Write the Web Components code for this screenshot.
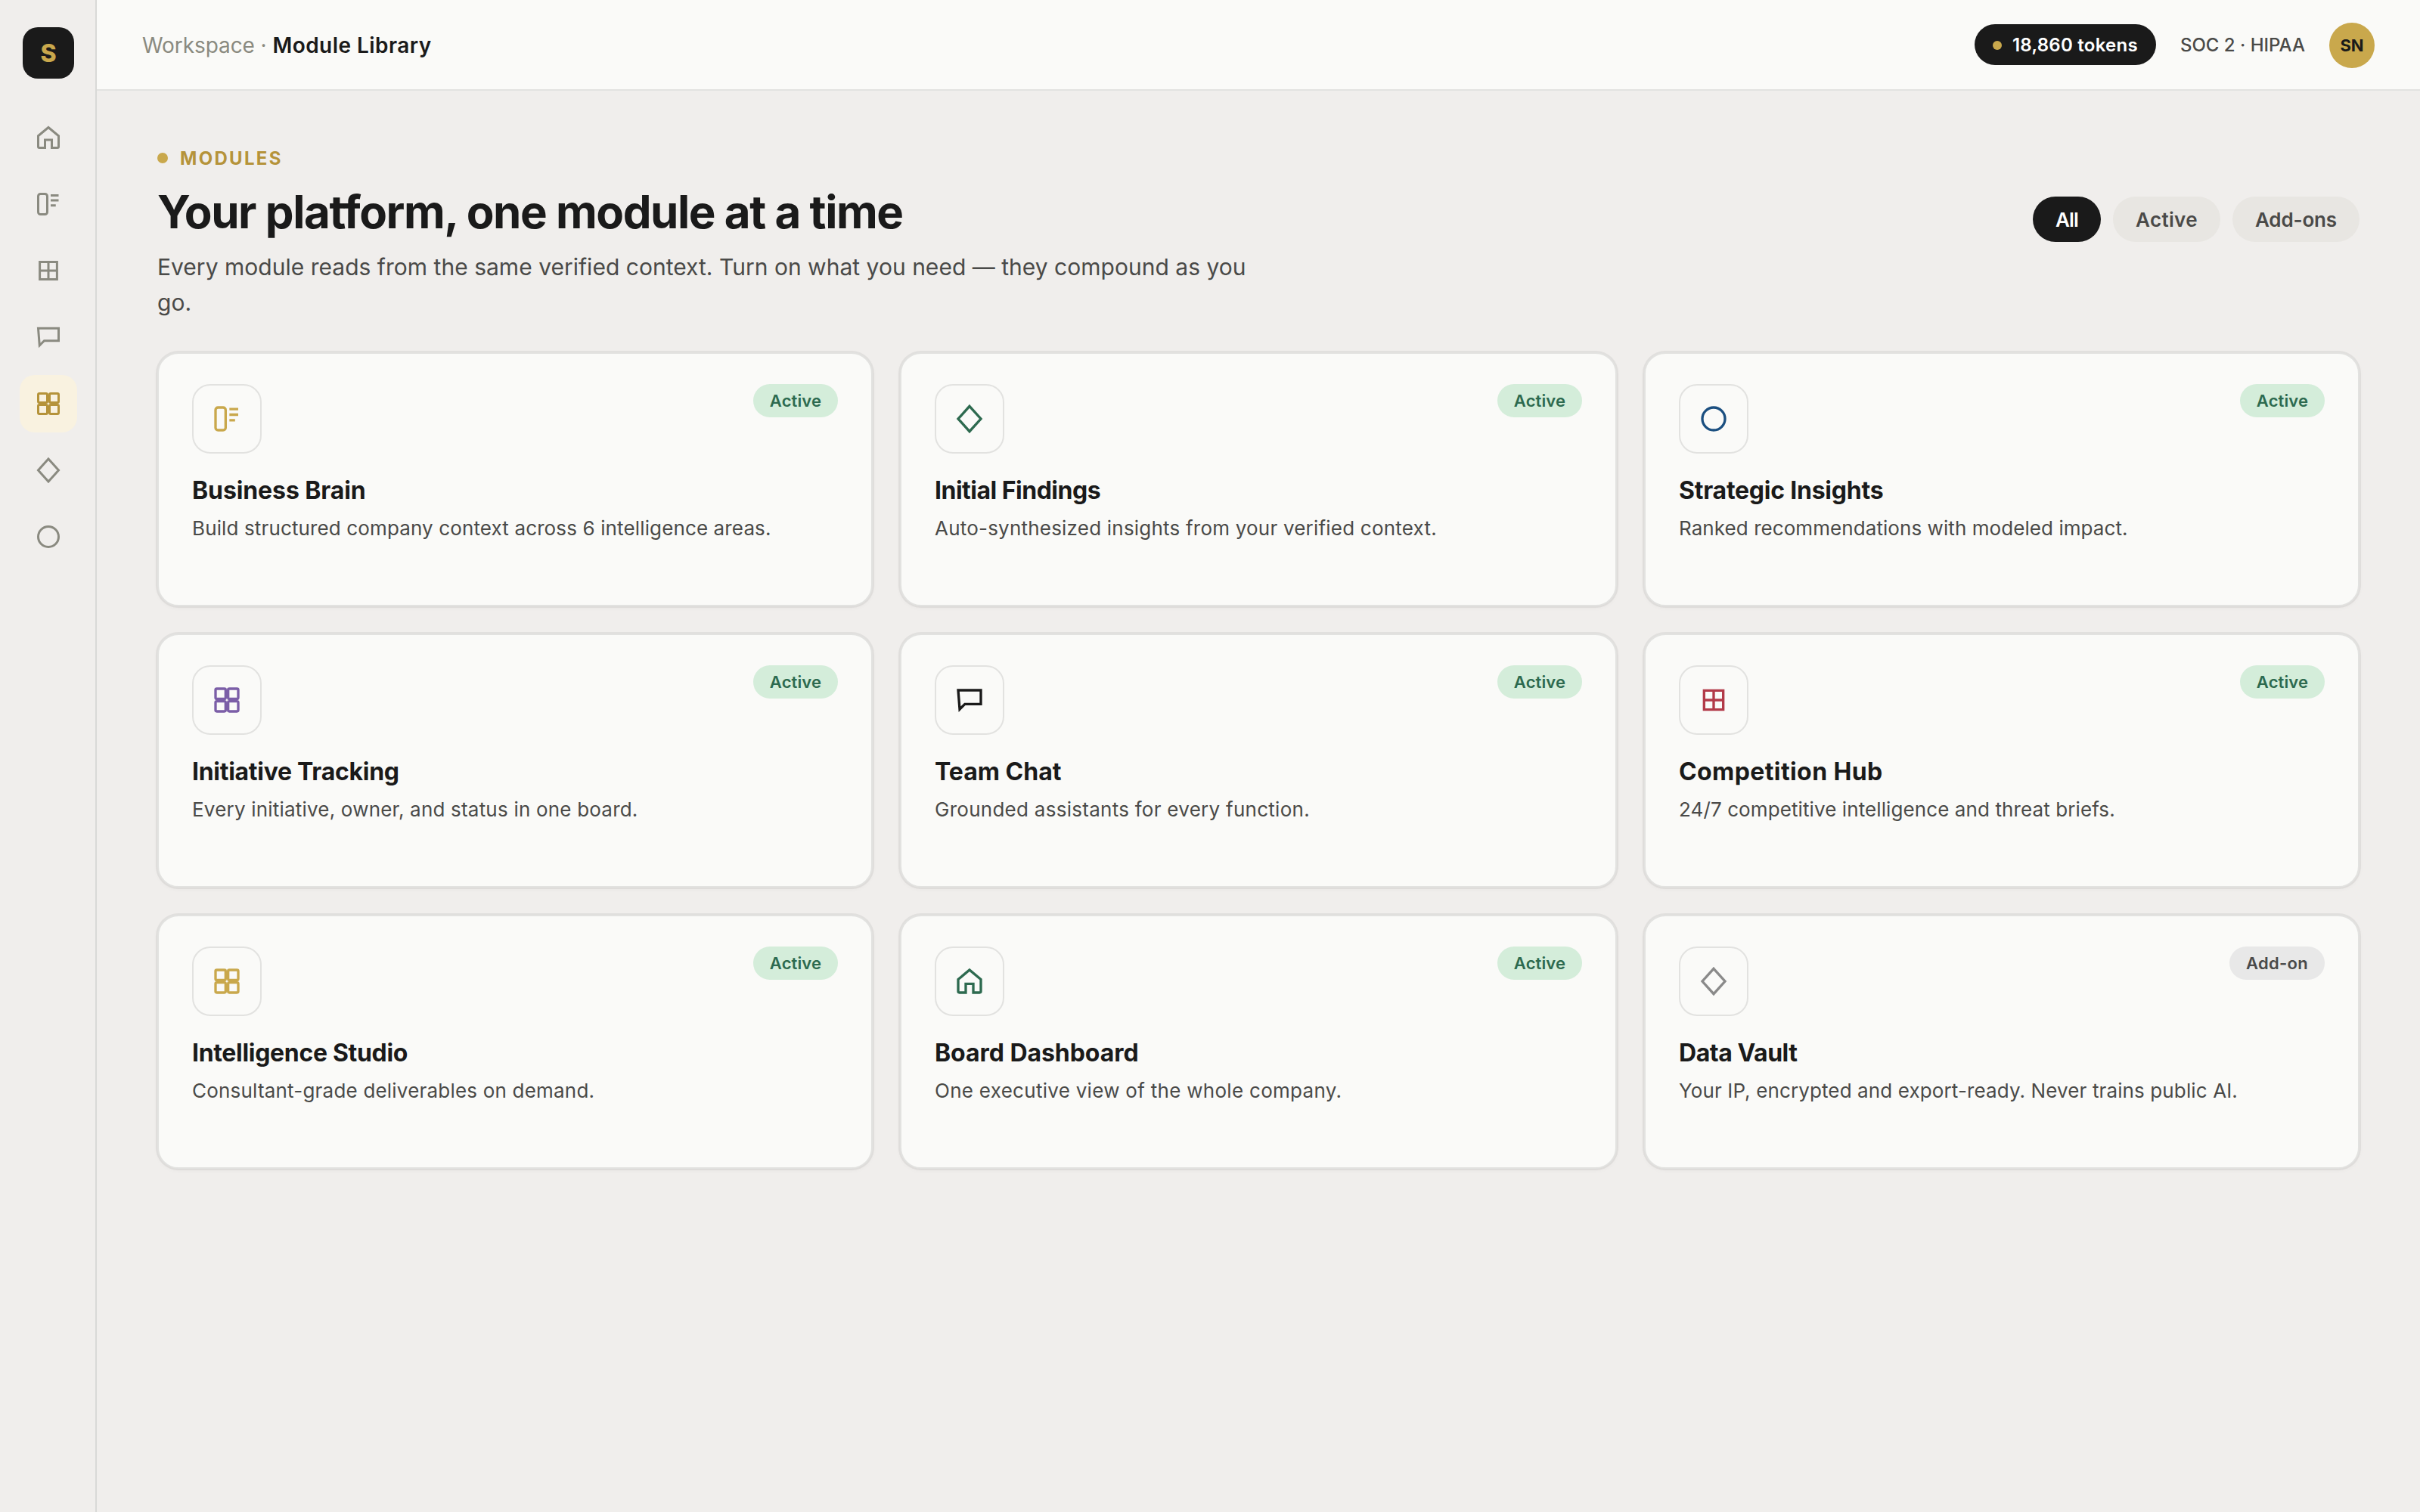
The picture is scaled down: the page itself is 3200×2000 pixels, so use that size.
<!DOCTYPE html>
<html lang="en">
<head>
<meta charset="utf-8">
<title>Module Library</title>
<style>
  :root {
    --bg: #f0eeec;
    --surface: #fafaf8;
    --line: #e2e2e0;
    --ink: #1a1a1a;
    --ink-2: #4a4a48;
    --muted: #8a8a80;
    --gold: #c9a84c;
    --gold-deep: #b5933a;
  }

  body {
    margin: 0;
    background: var(--bg);
    color: var(--ink);
    font-family: Inter, "Liberation Sans", sans-serif;
  }
</style>
</head>
<body>
<app-shell>
  <side-nav slot="nav"></side-nav>
  <top-bar slot="top" section="Workspace" page="Module Library" tokens="18,860 tokens" compliance="SOC 2 · HIPAA" initials="SN"></top-bar>
  <page-head eyebrow="Modules">
    <span slot="title">Your platform, one module at a time</span>
    <span slot="lead">Every module reads from the same verified context. Turn on what you need — they compound as you go.</span>
    <filter-pill slot="filters" style="letter-spacing: -0.8px" selected>All</filter-pill>
    <filter-pill slot="filters" style="letter-spacing: 0.35px">Active</filter-pill>
    <filter-pill slot="filters" style="letter-spacing: -0.15px">Add-ons</filter-pill>
  </page-head>
  <module-grid>
    <module-card icon="brain" color="#c9a84c" name="Business Brain" style="--name-track: -0.1px; --text-track: 0.13px">Build structured company context across 6 intelligence areas.</module-card>
    <module-card icon="diamond" color="#2d6a4f" name="Initial Findings" style="--name-track: -0.5px; --text-track: 0.21px">Auto-synthesized insights from your verified context.</module-card>
    <module-card icon="circle" color="#1b4f80" name="Strategic Insights" style="--name-track: -0.24px; --text-track: 0.07px">Ranked recommendations with modeled impact.</module-card>
    <module-card icon="grid" color="#7b5ea7" name="Initiative Tracking" style="--name-track: -0.28px; --text-track: 0.2px">Every initiative, owner, and status in one board.</module-card>
    <module-card icon="chat" color="#1a1a1a" name="Team Chat" style="--name-track: 0px; --text-track: 0.27px">Grounded assistants for every function.</module-card>
    <module-card icon="table" color="#b23a48" name="Competition Hub" style="--name-track: 0.4px; --text-track: 0.1px">24/7 competitive intelligence and threat briefs.</module-card>
    <module-card icon="grid" color="#c9a84c" name="Intelligence Studio" style="--text-track: 0.2px">Consultant-grade deliverables on demand.</module-card>
    <module-card icon="home" color="#2d6a4f" name="Board Dashboard" style="--name-track: -0.05px; --text-track: 0.29px">One executive view of the whole company.</module-card>
    <module-card icon="diamond" color="#8a8a8a" name="Data Vault" status="Add-on" style="--name-track: -0.45px; --text-track: 0.12px">Your IP, encrypted and export-ready. Never trains public AI.</module-card>
  </module-grid>
</app-shell>

<script>
const ICONS = {
  home: '<path d="M3 10.5L12 3l9 7.5V20a1 1 0 0 1-1 1h-5v-7H9v7H4a1 1 0 0 1-1-1z"/>',
  brain: '<rect x="3" y="3" width="8" height="18" rx="2"/><path d="M14 4.3h7M14 8.7h7M14 13.1h4.5"/>',
  table: '<path d="M4.4 4.4h15.2v15.2H4.4zM12 4.4v15.2M4.4 12h15.2"/>',
  chat: '<path d="M3 4.2h18v11H8.3L4.2 19.3z"/>',
  grid: '<rect x="3" y="3" width="8" height="8" rx="1"/><rect x="13" y="3" width="8" height="8" rx="1"/><rect x="3" y="13" width="8" height="8" rx="1"/><rect x="13" y="13" width="8" height="8" rx="1"/>',
  diamond: '<path d="M12 2l9 10-9 10-9-10z"/>',
  circle: '<circle cx="12" cy="12" r="9"/>'
};

class UiIcon extends HTMLElement {
  connectedCallback() {
    this.attachShadow({ mode: "open" });
    this.shadowRoot.innerHTML = `
      <style>
        :host { display: block; width: 36px; height: 36px; }
        svg {
          display: block;
          width: 100%;
          height: 100%;
          fill: none;
          stroke: currentColor;
          stroke-width: 2;
        }
      </style>
      <svg viewBox="0 0 24 24">${ICONS[this.getAttribute("name")]}</svg>
    `;
  }
}

class AppShell extends HTMLElement {
  connectedCallback() {
    this.attachShadow({ mode: "open" });
    this.shadowRoot.innerHTML = `
      <style>
        :host {
          display: grid;
          grid-template-columns: 128px 1fr;
          min-height: 100vh;
        }
        .column { display: flex; flex-direction: column; min-width: 0; }
        main { padding: 70px 80px 80px; }
      </style>
      <slot name="nav"></slot>
      <div class="column">
        <slot name="top"></slot>
        <main><slot></slot></main>
      </div>
    `;
  }
}

class SideNav extends HTMLElement {
  connectedCallback() {
    const items = ["home", "brain", "table", "chat", "grid", "diamond", "circle"];
    this.attachShadow({ mode: "open" });
    this.shadowRoot.innerHTML = `
      <style>
        :host {
          display: flex;
          flex-direction: column;
          align-items: center;
          box-sizing: border-box;
          padding-top: 36px;
          box-shadow: inset -2px 0 #d9d9d7;
        }
        .logo {
          display: grid;
          place-items: center;
          width: 68px;
          height: 68px;
          margin-bottom: 40px;
          border-radius: 20px;
          background: var(--ink);
          color: var(--gold);
          font-size: 32px;
          font-weight: 800;
        }
        nav { display: grid; gap: 12px; }
        .item {
          display: grid;
          place-items: center;
          width: 76px;
          height: 76px;
          border-radius: 20px;
          color: var(--muted);
        }
        .item.active { background: #f9f2e0; color: var(--gold-deep); }
      </style>
      <div class="logo">S</div>
      <nav>
        ${items.map(name => `<div class="item${name === "grid" ? " active" : ""}"><ui-icon name="${name}"></ui-icon></div>`).join("")}
      </nav>
    `;
  }
}

class TopBar extends HTMLElement {
  connectedCallback() {
    const get = name => this.getAttribute(name);
    this.attachShadow({ mode: "open" });
    this.shadowRoot.innerHTML = `
      <style>
        :host {
          display: flex;
          align-items: center;
          justify-content: space-between;
          box-sizing: border-box;
          height: 120px;
          padding: 0 60px;
          background: var(--surface);
          border-bottom: 2px solid var(--line);
        }
        .crumbs { padding-top: 2px; font-size: 28px; letter-spacing: -0.08px; color: var(--muted); }
        .crumbs b { font-weight: 600; letter-spacing: 0.45px; color: var(--ink); }
        .right { display: flex; align-items: center; gap: 32px; }
        .tokens {
          display: flex;
          align-items: center;
          gap: 14px;
          box-sizing: border-box;
          height: 54px;
          padding: 0 24px;
          border-radius: 27px;
          background: var(--ink);
          color: #fff;
          font-size: 24px;
          font-weight: 600;
          letter-spacing: 0.25px;
        }
        .tokens i { width: 12px; height: 12px; margin-top: 2px; border-radius: 50%; background: var(--gold); }
        .tokens span { padding-top: 1px; }
        .compliance {
          padding-top: 1px;
          color: var(--ink-2);
          font-size: 24px;
          font-weight: 500;
        }
        .avatar {
          display: grid;
          place-items: center;
          width: 60px;
          height: 60px;
          margin-top: 2px;
          border-radius: 50%;
          background: var(--gold);
          font-size: 22px;
          font-weight: 700;
        }
      </style>
      <div class="crumbs">${get("section")} · <b>${get("page")}</b></div>
      <div class="right">
        <div class="tokens"><i></i><span>${get("tokens")}</span></div>
        <div class="compliance">${get("compliance")}</div>
        <div class="avatar">${get("initials")}</div>
      </div>
    `;
  }
}

class PageHead extends HTMLElement {
  connectedCallback() {
    this.attachShadow({ mode: "open" });
    this.shadowRoot.innerHTML = `
      <style>
        :host {
          display: flex;
          align-items: flex-start;
          justify-content: space-between;
          margin-bottom: 43px;
        }
        .eyebrow {
          display: flex;
          align-items: center;
          gap: 16px;
          height: 38px;
          color: var(--gold-deep);
          font-size: 24px;
          font-weight: 700;
          letter-spacing: 2.3px;
          text-transform: uppercase;
        }
        .eyebrow i { width: 14px; height: 14px; border-radius: 50%; background: var(--gold); }
        h1 {
          margin: 16px 0 0;
          font-size: 60px;
          font-weight: 700;
          letter-spacing: -1.45px;
          line-height: 72px;
        }
        p {
          max-width: 1442px;
          margin: 14px 0 0;
          color: var(--ink-2);
          font-size: 30px;
          letter-spacing: 0.02px;
          line-height: 1.55;
        }
        .filters { display: flex; gap: 16px; margin-top: 70px; }
      </style>
      <div>
        <div class="eyebrow"><i></i>${this.getAttribute("eyebrow")}</div>
        <h1><slot name="title"></slot></h1>
        <p><slot name="lead"></slot></p>
      </div>
      <div class="filters"><slot name="filters"></slot></div>
    `;
  }
}

class FilterPill extends HTMLElement {
  connectedCallback() {
    this.attachShadow({ mode: "open" });
    this.shadowRoot.innerHTML = `
      <style>
        :host {
          display: flex;
          align-items: center;
          height: 60px;
          padding: 0 30px;
          border-radius: 30px;
          background: #e8e6e2;
          color: var(--ink-2);
          font-size: 26px;
          font-weight: 600;
        }
        :host([selected]) { background: var(--ink); color: #fff; }
      </style>
      <slot></slot>
    `;
  }
}

class ModuleGrid extends HTMLElement {
  connectedCallback() {
    this.attachShadow({ mode: "open" });
    this.shadowRoot.innerHTML = `
      <style>
        /* whole-pixel column edges */
        :host {
          display: grid;
          grid-template-columns: 946fr 948fr 946fr;
          gap: 36px;
        }
      </style>
      <slot></slot>
    `;
  }
}

class ModuleCard extends HTMLElement {
  connectedCallback() {
    const status = this.getAttribute("status") || "Active";
    this.attachShadow({ mode: "open" });
    this.shadowRoot.innerHTML = `
      <style>
        :host {
          display: block;
          box-sizing: border-box;
          min-height: 336px;
          padding: 40px 44px;
          border: 2px solid var(--line);
          border-radius: 28px;
          background: var(--surface);
          box-shadow: 0 0 0 2px rgba(0, 0, 0, 0.055), 0 2px 6px rgba(0, 0, 0, 0.04);
        }
        .top { display: flex; justify-content: space-between; align-items: flex-start; }
        .tile {
          display: grid;
          place-items: center;
          box-sizing: border-box;
          width: 92px;
          height: 92px;
          border: 2px solid var(--line);
          border-radius: 24px;
        }
        .tile ui-icon { width: 40px; height: 40px; }
        .badge {
          display: flex;
          align-items: center;
          height: 44px;
          padding: 0 22px;
          border-radius: 22px;
          background: #d4edda;
          color: #2d6a4f;
          font-size: 22px;
          font-weight: 600;
          letter-spacing: 0.1px;
        }
        .badge.add-on { background: #e8e8e8; color: #4a4a4a; letter-spacing: 0.3px; }
        h3 {
          margin: 30px 0 0;
          font-size: 32px;
          font-weight: 700;
          letter-spacing: var(--name-track, -0.01em);
          line-height: 38px;
        }
        p {
          margin: 11px 0 0;
          color: var(--ink-2);
          font-size: 26px;
          letter-spacing: var(--text-track, 0);
          line-height: 39px;
        }
      </style>
      <div class="top">
        <div class="tile" style="color: ${this.getAttribute("color")}"><ui-icon name="${this.getAttribute("icon")}"></ui-icon></div>
        <div class="badge ${status.toLowerCase()}">${status}</div>
      </div>
      <h3>${this.getAttribute("name")}</h3>
      <p><slot></slot></p>
    `;
  }
}

customElements.define("ui-icon", UiIcon);
customElements.define("app-shell", AppShell);
customElements.define("side-nav", SideNav);
customElements.define("top-bar", TopBar);
customElements.define("page-head", PageHead);
customElements.define("filter-pill", FilterPill);
customElements.define("module-grid", ModuleGrid);
customElements.define("module-card", ModuleCard);
</script>
</body>
</html>
